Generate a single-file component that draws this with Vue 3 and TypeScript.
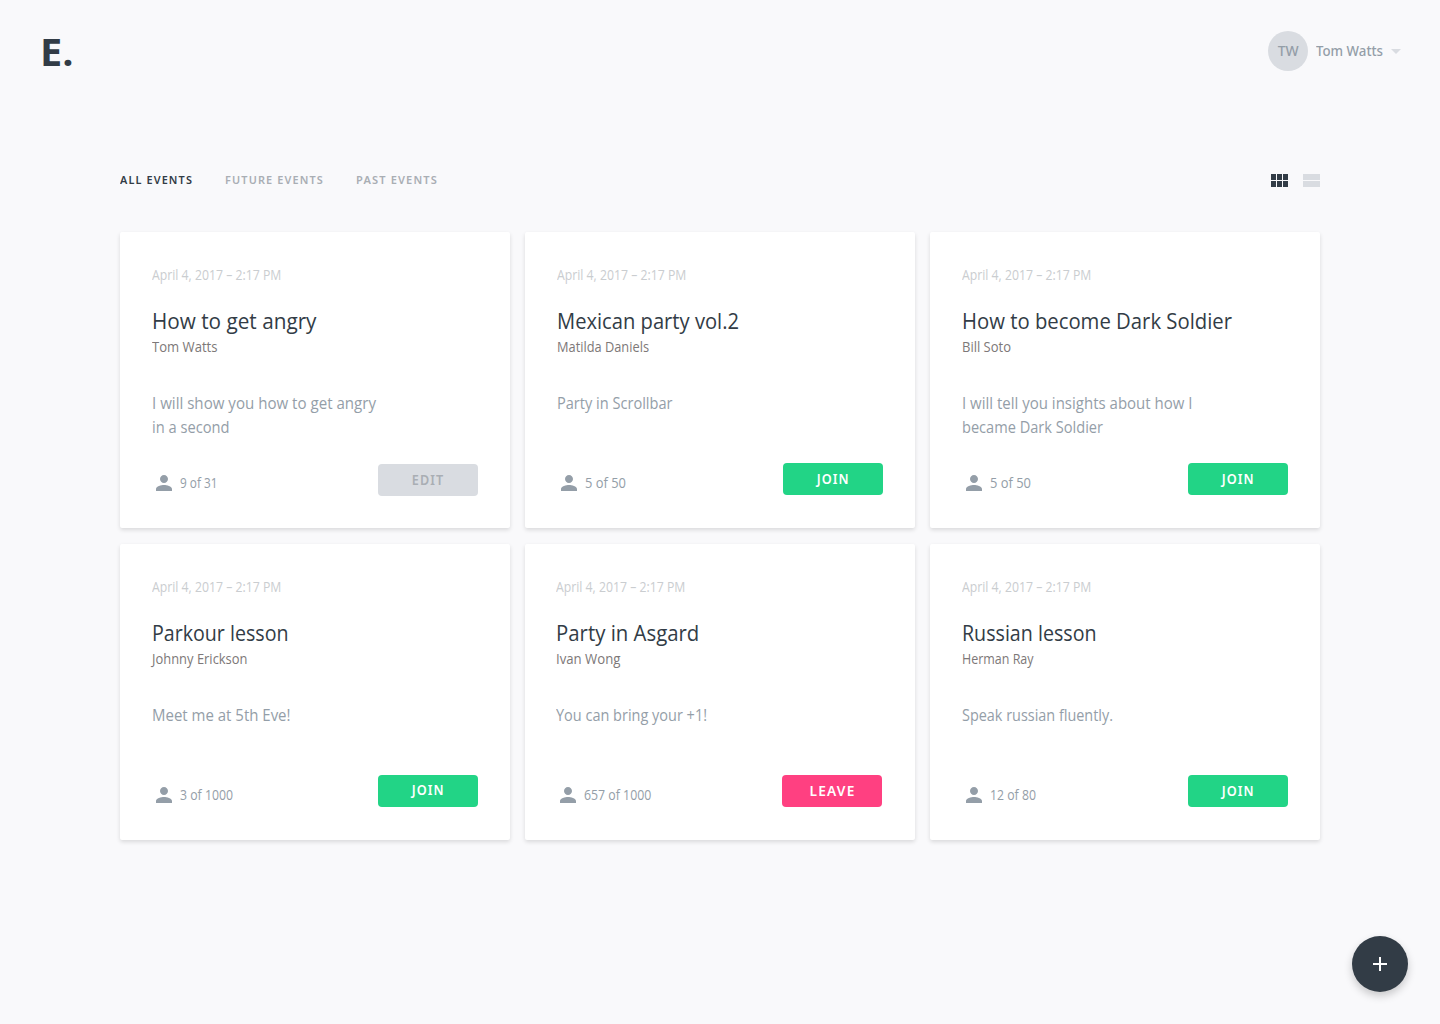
<script setup lang="ts">
import type { Directive } from 'vue'

interface Line { text: string; width: number }
interface EventCard {
  title: Line
  author: Line
  description: Line[]
  count: Line
  action: 'edit' | 'join' | 'leave'
  label: Line
  variant?: string
}

const date: Line = { text: 'April 4, 2017 – 2:17 PM', width: 129.3 }
const join: Line = { text: 'JOIN', width: 33 }

const tabs: (Line & { active?: boolean })[] = [
  { text: 'ALL EVENTS', width: 73, active: true },
  { text: 'FUTURE EVENTS', width: 99 },
  { text: 'PAST EVENTS', width: 82 },
]

const events: EventCard[] = [
  {
    title: { text: 'How to get angry', width: 164.5 },
    author: { text: 'Tom Watts', width: 65.5 },
    description: [{ text: 'I will show you how to get angry', width: 224 }, { text: 'in a second', width: 77.5 }],
    count: { text: '9 of 31', width: 37.5 },
    action: 'edit',
    label: { text: 'EDIT', width: 32.5 },
  },
  {
    title: { text: 'Mexican party vol.2', width: 182 },
    author: { text: 'Matilda Daniels', width: 92 },
    description: [{ text: 'Party in Scrollbar', width: 115.5 }],
    count: { text: '5 of 50', width: 41 },
    action: 'join',
    label: join,
  },
  {
    title: { text: 'How to become Dark Soldier', width: 270 },
    author: { text: 'Bill Soto', width: 49 },
    description: [{ text: 'I will tell you insights about how I', width: 230.5 }, { text: 'became Dark Soldier', width: 141 }],
    count: { text: '5 of 50', width: 41 },
    action: 'join',
    label: join,
  },
  {
    title: { text: 'Parkour lesson', width: 136.5 },
    author: { text: 'Johnny Erickson', width: 95.5 },
    description: [{ text: 'Meet me at 5th Eve!', width: 138.5 }],
    count: { text: '3 of 1000', width: 53 },
    action: 'join',
    label: join,
    variant: 'raised',
  },
  {
    title: { text: 'Party in Asgard', width: 143.3 },
    author: { text: 'Ivan Wong', width: 64.5 },
    description: [{ text: 'You can bring your +1!', width: 151 }],
    count: { text: '657 of 1000', width: 67.3 },
    action: 'leave',
    label: { text: 'LEAVE', width: 46 },
    variant: 'shifted',
  },
  {
    title: { text: 'Russian lesson', width: 134.5 },
    author: { text: 'Herman Ray', width: 71.5 },
    description: [{ text: 'Speak russian fluently.', width: 151 }],
    count: { text: '12 of 80', width: 46 },
    action: 'join',
    label: join,
  },
]

// Condenses a line of text to the given width.
const vFit: Directive<HTMLElement, number> = {
  mounted(el, { value }) {
    el.style.transform = `scaleX(${value / el.getBoundingClientRect().width})`
  },
}
</script>

<template>
  <div class="page">
    <header class="header">
      <a class="logo"><span v-fit="33.5" class="fit">E.</span></a>
      <div class="user">
        <div class="avatar"><span v-fit="21" class="fit mid">TW</span></div>
        <div class="user-name"><span v-fit="67" class="fit">Tom Watts</span></div>
        <svg class="caret" width="10" height="5" viewBox="0 0 10 5"><path d="M0 0h10L5 5z" /></svg>
      </div>
    </header>

    <main class="content">
      <div class="toolbar">
        <nav class="tabs">
          <a v-for="tab in tabs" :key="tab.text" class="tab" :class="{ active: tab.active }" :style="{ width: tab.width + 'px' }">
            <span v-fit="tab.width" class="fit">{{ tab.text }}</span>
          </a>
        </nav>
        <div class="views">
          <svg class="view active" viewBox="0 0 24 24"><path d="M4 11h5V5H4v6zm0 7h5v-6H4v6zm6 0h5v-6h-5v6zm6 0h5v-6h-5v6zm-6-7h5V5h-5v6zm6-6v6h5V5h-5z" /></svg>
          <svg class="view" viewBox="0 0 24 24"><path d="M4 18h17v-6H4v6zM4 5v6h17V5H4z" /></svg>
        </div>
      </div>

      <section class="grid">
        <article v-for="event in events" :key="event.title.text" class="card" :class="event.variant">
          <div class="date"><span v-fit="date.width" class="fit">{{ date.text }}</span></div>
          <h2 class="title"><span v-fit="event.title.width" class="fit">{{ event.title.text }}</span></h2>
          <div class="author"><span v-fit="event.author.width" class="fit">{{ event.author.text }}</span></div>
          <div class="description">
            <div v-for="line in event.description" :key="line.text" class="line">
              <span v-fit="line.width" class="fit">{{ line.text }}</span>
            </div>
          </div>
          <footer class="footer">
            <svg class="person" viewBox="0 0 24 24"><path d="M12 12c2.21 0 4-1.79 4-4s-1.79-4-4-4-4 1.79-4 4 1.79 4 4 4zm0 2c-2.67 0-8 1.34-8 4v2h16v-2c0-2.66-5.33-4-8-4z" /></svg>
            <div class="count"><span v-fit="event.count.width" class="fit">{{ event.count.text }}</span></div>
            <button class="button" :class="event.action">
              <span v-fit="event.label.width" class="fit mid">{{ event.label.text }}</span>
            </button>
          </footer>
        </article>
      </section>
    </main>

    <button class="fab" aria-label="Add event">
      <svg width="24" height="24" viewBox="0 0 24 24"><path d="M19 13h-6v6h-2v-6H5v-2h6V5h2v6h6v2z" /></svg>
    </button>
  </div>
</template>

<style>
body {
  margin: 0;
  background: #f9f9fb;
}
</style>

<style scoped>
.page {
  box-sizing: border-box;
  height: 1024px;
  overflow: hidden;
  background: #f9f9fb;
  color: #323c46;
  font-family: 'Open Sans', 'Noto Sans', sans-serif;
}
.fit {
  display: inline-block;
  white-space: nowrap;
  transform-origin: 0 50%;
}
.mid {
  transform-origin: 50% 50%;
}
.header {
  display: flex;
  justify-content: space-between;
  align-items: flex-start;
  height: 137px;
  padding: 31px 39px 0 40px;
}
.logo {
  font-size: 38px;
  font-weight: 700;
  line-height: 40px;
}
.user {
  display: flex;
  align-items: center;
  height: 40px;
  color: #949ea8;
  font-family: 'Noto Sans', 'Open Sans', sans-serif;
  font-weight: 500;
  line-height: 40px;
}
.avatar {
  display: flex;
  justify-content: center;
  width: 40px;
  height: 40px;
  border-radius: 50%;
  background: #d9dce1;
  font-size: 13.5px;
}
.user-name {
  width: 67px;
  height: 40px;
  margin-left: 8px;
  font-size: 14px;
}
.caret {
  margin-left: 8px;
  margin-top: 1px;
  fill: #d9dce1;
}
.content {
  width: 1200px;
  margin: 0 auto;
}
.toolbar {
  display: flex;
  justify-content: space-between;
  height: 64px;
}
.tabs {
  display: flex;
  gap: 32px;
}
.tab {
  color: #a9aeb4;
  font-family: 'Noto Sans', 'Open Sans', sans-serif;
  font-size: 11.5px;
  font-weight: 600;
  letter-spacing: 1.2px;
  line-height: 24px;
}
.tab.active {
  color: #323c46;
}
.views {
  display: flex;
  gap: 8px;
  margin-right: -3px;
}
.view {
  width: 24px;
  height: 24px;
  padding-top: 1px;
  fill: #d9dce1;
}
.view.active {
  fill: #323c46;
}
.grid {
  display: grid;
  grid-template-columns: repeat(3, 390px);
  gap: 16px 15px;
}
.card {
  box-sizing: border-box;
  height: 296px;
  padding: 32px;
  border-radius: 2px;
  background: #fff;
  box-shadow: 0 2px 4px rgba(0, 0, 0, 0.13);
}
.card.shifted {
  padding: 32px 33px 32px 31px;
}
.date {
  color: #cacdd0;
  font-size: 14px;
  line-height: 22px;
}
.title {
  margin: 19px 0 -1px;
  font-size: 21px;
  font-weight: 400;
  line-height: 32px;
}
.author {
  color: #7d7878;
  font-size: 14px;
  line-height: 22px;
}
.description {
  height: 48px;
  margin-top: 33px;
  color: #949ea8;
  font-size: 15.5px;
  line-height: 24px;
}
.footer {
  display: flex;
  align-items: flex-end;
  height: 32px;
  margin-top: 24px;
}
.person {
  width: 24px;
  height: 24px;
  fill: #949ea8;
}
.count {
  margin-left: 4px;
  color: #949ea8;
  font-size: 14px;
  line-height: 24px;
}
.button {
  width: 100px;
  height: 32px;
  margin-left: auto;
  padding: 0 0 0 1px;
  border: 0;
  border-radius: 4px;
  background: #22d486;
  color: #fff;
  font: 600 14px/32px 'Noto Sans', 'Open Sans', sans-serif;
  letter-spacing: 1.2px;
}
.button.edit {
  margin-bottom: -1px;
  background: #d9dce1;
  color: #a9aeb4;
}
.button.leave {
  background: #ff4081;
}
.raised .button {
  line-height: 30px;
  padding-bottom: 2px;
}
.fab {
  position: absolute;
  left: 1352px;
  top: 936px;
  display: flex;
  align-items: center;
  justify-content: center;
  width: 56px;
  height: 56px;
  padding: 0;
  border: 0;
  border-radius: 50%;
  background: #323c46;
  box-shadow: 0 4px 9px rgba(0, 0, 0, 0.2);
}
.fab svg {
  fill: #fff;
}
</style>
